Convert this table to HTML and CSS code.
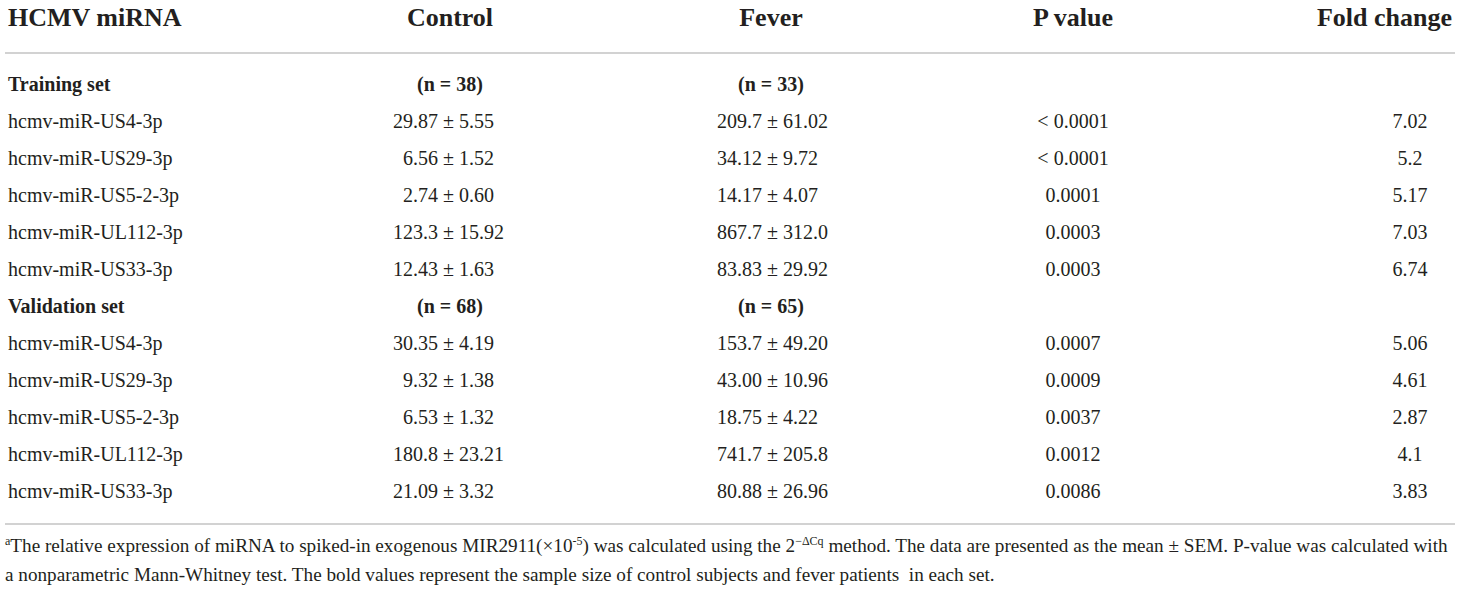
FILE: index.html
```html
<!DOCTYPE html>
<html lang="en">
<head>
    <meta charset="UTF-8">
    <title>HCMV miRNA expression</title>
    <link rel="stylesheet" href="styles.css">
</head>
<body>
    <div class="table-wrap">
        <table class="mirna-table">
            <colgroup>
                <col class="col-name">
                <col class="col-control">
                <col class="col-fever">
                <col class="col-p">
                <col class="col-fold">
            </colgroup>
            <thead>
                <tr>
                    <th class="name">HCMV miRNA</th>
                    <th>Control</th>
                    <th>Fever</th>
                    <th>P value</th>
                    <th class="fold">Fold change</th>
                </tr>
            </thead>
            <tbody>
                <tr class="set-row first">
                    <td class="name">Training set</td>
                    <td>(n = 38)</td>
                    <td>(n = 33)</td>
                    <td></td>
                    <td></td>
                </tr>
                <tr>
                    <td class="name">hcmv-miR-US4-3p</td>
                    <td class="control"><span class="lhs">29.87</span> ± 5.55</td>
                    <td class="fever">209.7 ± 61.02</td>
                    <td>&lt; 0.0001</td>
                    <td class="fold">7.02</td>
                </tr>
                <tr>
                    <td class="name">hcmv-miR-US29-3p</td>
                    <td class="control"><span class="lhs">6.56</span> ± 1.52</td>
                    <td class="fever">34.12 ± 9.72</td>
                    <td>&lt; 0.0001</td>
                    <td class="fold">5.2</td>
                </tr>
                <tr>
                    <td class="name">hcmv-miR-US5-2-3p</td>
                    <td class="control"><span class="lhs">2.74</span> ± 0.60</td>
                    <td class="fever">14.17 ± 4.07</td>
                    <td>0.0001</td>
                    <td class="fold">5.17</td>
                </tr>
                <tr>
                    <td class="name">hcmv-miR-UL112-3p</td>
                    <td class="control"><span class="lhs">123.3</span> ± 15.92</td>
                    <td class="fever">867.7 ± 312.0</td>
                    <td>0.0003</td>
                    <td class="fold">7.03</td>
                </tr>
                <tr>
                    <td class="name">hcmv-miR-US33-3p</td>
                    <td class="control"><span class="lhs">12.43</span> ± 1.63</td>
                    <td class="fever">83.83 ± 29.92</td>
                    <td>0.0003</td>
                    <td class="fold">6.74</td>
                </tr>
                <tr class="set-row">
                    <td class="name">Validation set</td>
                    <td>(n = 68)</td>
                    <td>(n = 65)</td>
                    <td></td>
                    <td></td>
                </tr>
                <tr>
                    <td class="name">hcmv-miR-US4-3p</td>
                    <td class="control"><span class="lhs">30.35</span> ± 4.19</td>
                    <td class="fever">153.7 ± 49.20</td>
                    <td>0.0007</td>
                    <td class="fold">5.06</td>
                </tr>
                <tr>
                    <td class="name">hcmv-miR-US29-3p</td>
                    <td class="control"><span class="lhs">9.32</span> ± 1.38</td>
                    <td class="fever">43.00 ± 10.96</td>
                    <td>0.0009</td>
                    <td class="fold">4.61</td>
                </tr>
                <tr>
                    <td class="name">hcmv-miR-US5-2-3p</td>
                    <td class="control"><span class="lhs">6.53</span> ± 1.32</td>
                    <td class="fever">18.75 ± 4.22</td>
                    <td>0.0037</td>
                    <td class="fold">2.87</td>
                </tr>
                <tr>
                    <td class="name">hcmv-miR-UL112-3p</td>
                    <td class="control"><span class="lhs">180.8</span> ± 23.21</td>
                    <td class="fever">741.7 ± 205.8</td>
                    <td>0.0012</td>
                    <td class="fold">4.1</td>
                </tr>
                <tr class="last">
                    <td class="name">hcmv-miR-US33-3p</td>
                    <td class="control"><span class="lhs">21.09</span> ± 3.32</td>
                    <td class="fever">80.88 ± 26.96</td>
                    <td>0.0086</td>
                    <td class="fold">3.83</td>
                </tr>
            </tbody>
        </table>

        <p class="footnote">
            <sup>a</sup>The relative expression of miRNA to spiked-in exogenous MIR2911(×10<sup>-5</sup>) was calculated using the 2<sup>−ΔCq</sup> method. The data are presented as the mean ± SEM. P-value was calculated with<br>
            a nonparametric Mann-Whitney test. The bold values represent the sample size of control subjects and fever patients&nbsp; in each set.
        </p>
    </div>
</body>
</html>
```

FILE: styles.css
```css
* {
    margin: 0;
    padding: 0;
    box-sizing: border-box;
}

body {
    background-color: #fff;
    color: #231f20;
    font-family: 'Liberation Serif', 'Times New Roman', serif;
}

.table-wrap {
    padding: 0 5px;
}

.mirna-table {
    width: 1450px;
    table-layout: fixed;
    border-collapse: collapse;
    border-bottom: 2px solid #d2d2d2;
}

.col-name {
    width: 295px;
}

.col-control {
    width: 300px;
}

.col-fever {
    width: 342px;
}

.col-p {
    width: 262px;
}

.col-fold {
    width: 251px;
}

.mirna-table th {
    font-size: 26px;
    font-weight: bold;
    line-height: 34px;
    padding: 1px 0 17px;
    text-align: center;
    white-space: nowrap;
    border-bottom: 2px solid #d2d2d2;
}

.mirna-table th.name {
    text-align: left;
    padding-left: 3px;
}

.mirna-table th.fold {
    text-align: right;
    padding-right: 3px;
}

.mirna-table td {
    font-size: 20px;
    line-height: 37px;
    text-align: center;
    white-space: nowrap;
    vertical-align: top;
}

.mirna-table td.name {
    text-align: left;
    padding-left: 3px;
}

.set-row td {
    font-weight: bold;
}

.mirna-table tr.first td {
    padding-top: 12px;
}

.mirna-table tr.last td {
    padding-bottom: 13px;
}

.mirna-table td.control {
    text-align: left;
    padding-left: 78px;
}

.lhs {
    display: inline-block;
    width: 60px;
    text-align: right;
}

.mirna-table td.fever {
    text-align: left;
    padding-left: 117px;
}

.mirna-table td.fold {
    padding-left: 161px;
}

.footnote {
    margin-top: 6px;
    font-size: 19.2px;
    line-height: 29px;
    white-space: nowrap;
}

.footnote sup {
    font-size: 12px;
    line-height: 0;
    vertical-align: 7px;
}
```
